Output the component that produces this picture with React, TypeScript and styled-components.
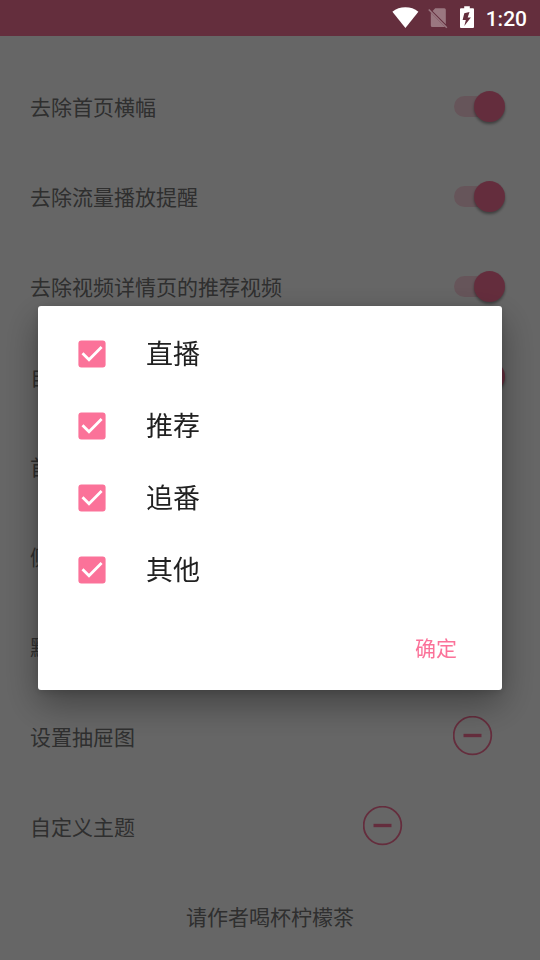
import React from "react";
import styled, { createGlobalStyle } from "styled-components";

const PINK = "#fb7299";

const GlobalStyle = createGlobalStyle`
  *, *::before, *::after { box-sizing: border-box; }
  body {
    margin: 0;
    background: #ffffff;
    font-family: Roboto, "Noto Sans CJK SC", sans-serif;
  }
`;

const Screen = styled.div`
  display: flex;
  flex-direction: column;
  min-height: 100vh;
  overflow: hidden;
`;

const StatusBar = styled.header`
  position: relative;
  z-index: 2;
  display: flex;
  align-items: center;
  justify-content: flex-end;
  height: 36px;
  padding-right: 13px;
  background: #642e3d;
  color: #ffffff;

  svg {
    display: block;
  }
`;

const StatusIcons = styled.div`
  display: flex;
  align-items: center;
  gap: 9px;
  margin-right: 9px;
`;

const Clock = styled.time`
  padding-top: 2px;
  font-size: 21px;
  line-height: 24px;
  font-weight: 500;
`;

const Settings = styled.main`
  display: flex;
  flex-direction: column;
  padding-top: 27px;
  color: #757575;
  font-size: 21px;
  line-height: 30px;
`;

const SettingRow = styled.div<{ $end: number }>`
  display: flex;
  align-items: center;
  justify-content: space-between;
  height: 90px;
  padding: 0 ${(p) => p.$end}px 0 30px;
`;

const SwitchInput = styled.input`
  appearance: none;
  display: flex;
  align-items: flex-start;
  justify-content: flex-end;
  position: relative;
  width: 51px;
  height: 34px;
  margin: 0;

  &::before {
    content: "";
    position: absolute;
    left: 0;
    top: 5px;
    width: 46px;
    height: 21px;
    border-radius: 11px;
    background: ${PINK};
    opacity: 0.3;
  }

  &::after {
    content: "";
    position: relative;
    width: 31px;
    height: 31px;
    border-radius: 50%;
    background: ${PINK};
    box-shadow: 0 2px 3px rgba(0, 0, 0, 0.4);
  }
`;

const IconButton = styled.button`
  display: block;
  margin: 0;
  padding: 0;
  border: 0;
  background: none;
  color: ${PINK};

  svg {
    display: block;
  }
`;

const DonateButton = styled.button`
  height: 87px;
  padding: 2px 0 0;
  border: 0;
  background: none;
  color: inherit;
  font: inherit;
  text-align: center;
`;

const Scrim = styled.div`
  position: fixed;
  inset: 0;
  z-index: 1;
  display: flex;
  align-items: center;
  padding: 36px 38px 0;
  background: rgba(0, 0, 0, 0.6);
`;

const Dialog = styled.form`
  flex: 1;
  padding-top: 12px;
  border-radius: 3px;
  background: #ffffff;
  box-shadow: 0 14px 36px rgba(0, 0, 0, 0.36), 0 2px 8px rgba(0, 0, 0, 0.14);
`;

const Option = styled.label`
  display: flex;
  align-items: center;
  gap: 36px;
  height: 72px;
  padding: 0 36px;
  color: #212121;
  font-size: 27px;
  line-height: 36px;
`;

const OptionText = styled.span`
  padding-top: 2px;
`;

const CheckWrap = styled.span`
  display: grid;
  width: 36px;
  height: 36px;

  > * {
    grid-area: 1 / 1;
  }
`;

const CheckInput = styled.input`
  appearance: none;
  width: 36px;
  height: 36px;
  margin: 0;
`;

const CheckMark = styled.svg`
  display: block;
  width: 36px;
  height: 36px;
  pointer-events: none;
  visibility: hidden;

  ${CheckInput}:checked + & {
    visibility: visible;
  }
`;

const Actions = styled.div`
  display: flex;
  justify-content: flex-end;
  padding: 15px 33px;
`;

const TextButton = styled.button`
  height: 54px;
  padding: 2px 12px 0;
  border: 0;
  background: none;
  color: ${PINK};
  font: inherit;
  font-size: 21px;
  line-height: 30px;
`;

const MinusCircle = () => (
  <svg width="40" height="44" viewBox="0 0 40 44" aria-hidden="true">
    <circle cx="19.5" cy="19.5" r="18.8" fill="none" stroke="currentColor" strokeWidth="1.8" />
    <rect x="10.5" y="17.8" width="18" height="3.4" fill="currentColor" />
  </svg>
);

const switches = ["去除首页横幅", "去除流量播放提醒", "去除视频详情页的推荐视频", "自动领取瓜子"];
const plain = ["首页标签", "侧滑栏选项", "默认主页"];
const options = ["直播", "推荐", "追番", "其他"];

export default function App() {
  return (
    <Screen>
      <GlobalStyle />
      <StatusBar>
        <StatusIcons>
          <svg width="27" height="22" viewBox="0 0 27 22" aria-label="Wi-Fi">
            <path d="M.4 4.700C4 1.800 8.500.300 13.400.300s9.400 1.500 13 4.400L13.400 20.900z" fill="#fff" />
          </svg>
          <svg width="20" height="22" viewBox="0 0 20 22" aria-label="No SIM">
            <g fill="#fff" fillOpacity=".35">
              <path d="M7.200 1.300H16.300a1.500 1.500 0 0 1 1.500 1.500V17.300L4.600 3.900z" />
              <path d="M2.800 5.800L16.900 20H4.300a1.500 1.500 0 0 1-1.500-1.500z" />
              <path d="M1.300 2L.2 3.100 18.300 21.300 19.400 20.200z" />
            </g>
          </svg>
          <svg width="20" height="24" viewBox="0 0 20 24" aria-label="Charging">
            <path
              fill="#fff"
              fillRule="evenodd"
              d="M7.200 .3h5.600v2h3.200q1 0 1 1v17.700q0 1-1 1H4q-1 0-1-1V3.300q0-1 1-1h3.200zM12.500 6L7.300 7.300 5.600 14h3.200l-1.500 6L13.900 11.500h-3.200z"
            />
          </svg>
        </StatusIcons>
        <Clock>1:20</Clock>
      </StatusBar>

      <Settings>
        {switches.map((name, i) => (
          <SettingRow key={name} $end={35}>
            <label htmlFor={`switch-${i}`}>{name}</label>
            <SwitchInput id={`switch-${i}`} type="checkbox" role="switch" defaultChecked />
          </SettingRow>
        ))}
        {plain.map((name) => (
          <SettingRow key={name} $end={35}>
            <span>{name}</span>
          </SettingRow>
        ))}
        <SettingRow $end={47}>
          <span>设置抽屉图</span>
          <IconButton type="button" aria-label="清除抽屉图">
            <MinusCircle />
          </IconButton>
        </SettingRow>
        <SettingRow $end={137}>
          <span>自定义主题</span>
          <IconButton type="button" aria-label="清除主题">
            <MinusCircle />
          </IconButton>
        </SettingRow>
        <DonateButton type="button">请作者喝杯柠檬茶</DonateButton>
      </Settings>

      <Scrim>
        <Dialog role="dialog" aria-modal="true" onSubmit={(e) => e.preventDefault()}>
          {options.map((name) => (
            <Option key={name}>
              <CheckWrap>
                <CheckInput type="checkbox" defaultChecked />
                <CheckMark viewBox="0 0 36 36" aria-hidden="true">
                  <rect x="4.400" y="4.400" width="27.200" height="27.200" rx="3" fill={PINK} />
                  <path d="M8.500 17.300L15 23.700L27.600 11" fill="none" stroke="#fff" strokeWidth="2.800" />
                </CheckMark>
              </CheckWrap>
              <OptionText>{name}</OptionText>
            </Option>
          ))}
          <Actions>
            <TextButton type="submit">确定</TextButton>
          </Actions>
        </Dialog>
      </Scrim>
    </Screen>
  );
}
